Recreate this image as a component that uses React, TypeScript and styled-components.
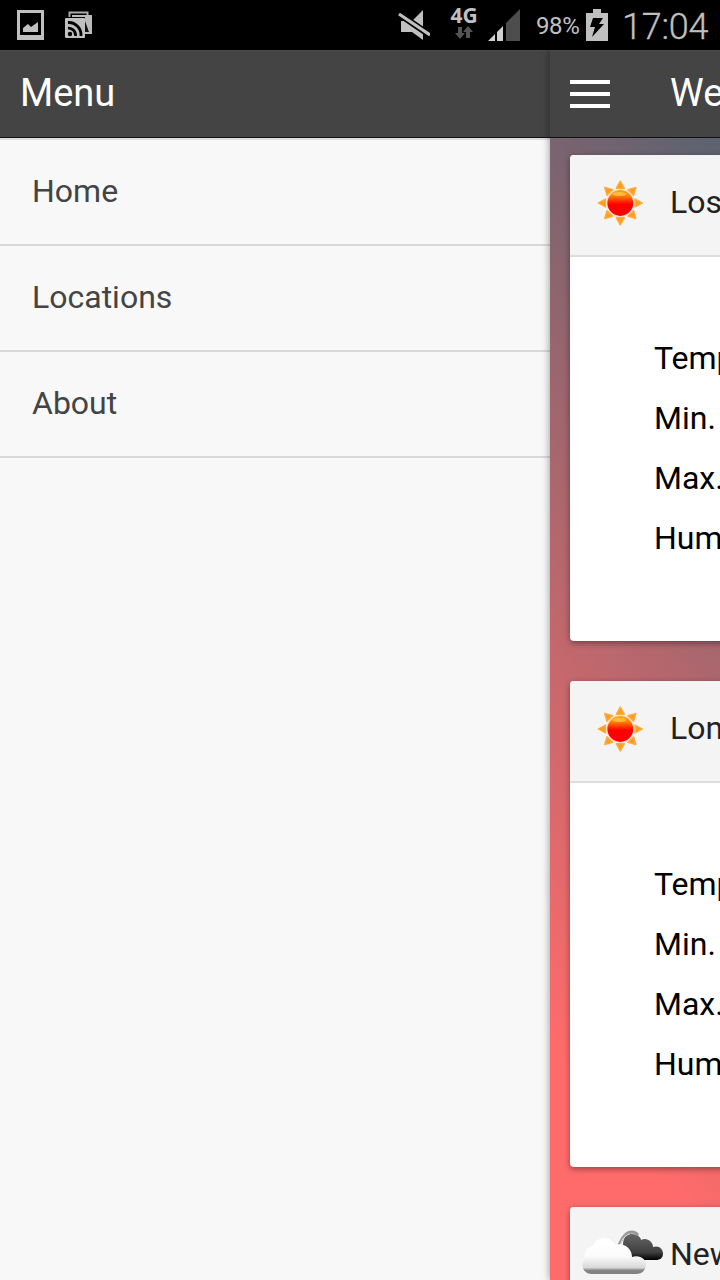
import React from 'react';
import styled, { createGlobalStyle } from 'styled-components';

const GlobalStyle = createGlobalStyle`
  * { box-sizing: border-box; }
  html, body { margin: 0; padding: 0; background: #000; }
  body { width: 720px; height: 1280px; overflow: hidden; font-family: Roboto, sans-serif; }
`;

const Phone = styled.div`
  display: flex;
  flex-direction: column;
  width: 720px;
  height: 1280px;
  overflow: hidden;
`;

const StatusBar = styled.header`
  display: flex;
  align-items: center;
  justify-content: space-between;
  flex: none;
  height: 50px;
  padding: 0 10px 0 16px;
  background: #000;
  color: #c0c0c0;
`;

const StatusGroup = styled.div<{ $gap?: number }>`
  display: flex;
  align-items: center;
  gap: ${({ $gap = 0 }) => $gap}px;
  svg { display: block; flex: none; }
`;

const Network = styled.div`
  display: flex;
  flex-direction: column;
  align-items: center;
  width: 28px;
  height: 50px;
  margin: 0 10px 0 20px;
  padding-top: 5px;
  font: 700 21px/20px 'Noto Sans', sans-serif;
`;

const Percent = styled.span`
  width: 44px;
  margin: 2px 6px 0 16px;
  font-size: 24px;
  line-height: 28px;
  letter-spacing: -0.4px;
  white-space: nowrap;
`;

const Clock = styled.time`
  width: 88px;
  margin: 3px 0 0 14px;
  font-size: 36px;
  font-weight: 300;
  line-height: 44px;
  letter-spacing: -0.25px;
  -webkit-text-stroke: 0.3px currentColor;
  white-space: nowrap;
`;

const Screen = styled.main`
  display: flex;
  flex: 1;
  min-height: 0;
`;

const Drawer = styled.nav`
  width: 550px;
  flex: none;
  background: #f8f8f8;
`;

const Bar = styled.div`
  display: flex;
  align-items: center;
  height: 88px;
  padding: 0 20px;
  background: #444;
  border-bottom: 1px solid #111;
  box-shadow: inset 0 1px 0 #4b4b4b;
  color: #fff;
`;

const BarTitle = styled.h1`
  margin: 0;
  padding-bottom: 1px;
  font-size: 38px;
  line-height: 44px;
  font-weight: 400;
  white-space: nowrap;
`;

const Burger = styled.button`
  display: flex;
  flex: none;
  flex-direction: column;
  gap: 8px;
  width: 40px;
  margin: 1px 60px 0 0;
  padding: 0;
  border: 0;
  background: none;
`;

const BurgerLine = styled.span`
  height: 4px;
  background: #fff;
`;

const MenuList = styled.ul`
  margin: 0;
  padding: 0;
  list-style: none;
  border-top: 2px solid #ddd;
`;

const MenuItem = styled.li`
  display: flex;
  align-items: center;
  height: 106px;
  padding: 0 32px 2px;
  border-bottom: 2px solid #d9d9d9;
  color: #444;
  font-size: 32px;
  line-height: 38px;
`;

const Page = styled.section`
  width: 170px;
  flex: none;
  position: relative;
  box-shadow: 0 0 8px rgba(0, 0, 0, 0.42);
`;

const Feed = styled.div`
  display: flex;
  flex-direction: column;
  gap: 40px;
  height: 1142px;
  padding: 17px 0 0 20px;
  overflow: hidden;
  background: linear-gradient(230deg, #556270 -26px, #ff6b6b 714px);
`;

const Card = styled.article`
  flex: none;
  width: 680px;
  height: 486px;
  border-radius: 4px;
  background: #fff;
  box-shadow: 0 2px 6px rgba(0, 0, 0, 0.4);
  overflow: hidden;
`;

const CardHead = styled.div`
  display: flex;
  align-items: center;
  height: 102px;
  padding: 0 0 6px 10px;
  background: #f4f4f4;
  border-bottom: 2px solid #ddd;
  color: #222;
  font-size: 32px;
  line-height: 38px;
  svg { flex: none; margin-right: 10px; }
`;

const Readings = styled.div`
  display: flex;
  flex-direction: column;
  padding: 71px 0 0 84px;
  color: #000;
  font-size: 32px;
  line-height: 60px;
`;

const Sun = () => (
  <svg width="80" height="80" viewBox="0 0 80 80">
    <defs>
      <linearGradient id="sunFill" x1="0" y1="0" x2="0" y2="1">
        <stop offset="0" stopColor="#ffa526" />
        <stop offset="0.2" stopColor="#ff8a00" />
        <stop offset="0.45" stopColor="#ff2400" />
        <stop offset="0.55" stopColor="#ff0000" />
      </linearGradient>
    </defs>
    <g transform="translate(40.3 41)">
      {[0, 45, 90, 135, 180, 225, 270, 315].map((angle) => (
        <path key={angle} d="M-4 -14.8L0 -22L4 -14.8Z" fill="#ff9c19" stroke="#ffab3d" strokeWidth="1.4" strokeLinejoin="round" transform={`rotate(${angle})`} />
      ))}
      <circle r="14" fill="#ffd9c8" />
      <circle r="12.9" fill="url(#sunFill)" />
      <ellipse cx="-1" cy="-9" rx="7" ry="2" fill="#ffe071" opacity="0.5" />
    </g>
  </svg>
);

const Clouds = () => (
  <svg width="80" height="80" viewBox="0 0 80 80" overflow="visible">
    <defs>
      <linearGradient id="darkCloud" x1="0" y1="0" x2="0" y2="1">
        <stop offset="0" stopColor="#666" />
        <stop offset="0.7" stopColor="#404040" />
        <stop offset="1" stopColor="#000" />
      </linearGradient>
      <linearGradient id="lightCloud" x1="0" y1="0" x2="0" y2="1">
        <stop offset="0" stopColor="#fff" />
        <stop offset="0.5" stopColor="#fcfcfc" />
        <stop offset="0.82" stopColor="#d8d8d8" />
        <stop offset="0.9" stopColor="#868686" />
        <stop offset="1" stopColor="#808080" />
      </linearGradient>
    </defs>
    <path d="M46 40C40 30 44 19 52 20C58 20 61 24 61 26C67 23 73 28 73 33C79 31 83 35 83 39.5C83 44 80 46 76 46H58Z" fill="url(#darkCloud)" />
    <path d="M38 31C40 31 41 24 45 21C49 17 55 17 58 21" fill="none" stroke="#999" strokeWidth="2.8" />
    <path d="M40.5 30C42 25 45 21 50 20" fill="none" stroke="#e4e4e4" strokeWidth="0.8" />
    <path d="M12 60C3 60 0 51 5 45C3 38 8 32 13 32C16 22 31 21 35 31C43 28 52 34 52 43C60 40 67 46 66 51C65 57 62 60 56 60Z" fill="url(#lightCloud)" />
  </svg>
);

const GalleryIcon = () => (
  <svg width="28" height="30" viewBox="0 0 28 30">
    <path fill="#c0c0c0" fillRule="evenodd" d="M1 0H28V30H1ZM4 3V25H25V3Z" />
    <path fill="#c0c0c0" d="M7 22V18L12 14L15 17L22 12V22Z" />
  </svg>
);

const CastIcon = () => (
  <svg width="28" height="28" viewBox="0 0 28 28">
    <path d="M4.5 6V1.5H22.5V4" fill="none" stroke="#aaa" strokeWidth="2" />
    <path d="M7 4H27V23H20V6H7Z" fill="#bbb" />
    <path d="M20 10L24 21H20Z" fill="#111" />
    <rect x="0" y="7" width="20" height="20" rx="1" fill="#c0c0c0" />
    <circle cx="5" cy="23" r="2.2" fill="#000" />
    <path d="M3 17.2A7 7 0 0 1 10.5 25M3 11.5A12.5 12.5 0 0 1 16 25" fill="none" stroke="#000" strokeWidth="2.8" />
  </svg>
);

const MuteIcon = () => (
  <svg width="33" height="32" viewBox="0 0 33 32">
    <path d="M4 12H15L26 1V31L15 23H4Z" fill="#c0c0c0" />
    <path d="M-1 3L35 27.5" stroke="#000" strokeWidth="6.5" />
    <path d="M2 5L33 26" stroke="#c0c0c0" strokeWidth="3.2" />
  </svg>
);

const DataArrows = () => (
  <svg width="18" height="15" viewBox="0 0 18 15">
    <path d="M3 2H7V8H10L5 14L0 8H3ZM11 13V7H8L13 1L18 7H15V13Z" fill="#555" />
  </svg>
);

const SignalIcon = () => (
  <svg width="32" height="32" viewBox="0 0 32 32">
    <path d="M0 32L7 25V32ZM9 23L15 17V32H9Z" fill="#d0d0d0" />
    <path d="M18 14L32 0V32H18Z" fill="#4d4d4d" />
  </svg>
);

const BatteryIcon = () => (
  <svg width="22" height="32" viewBox="0 0 22 32">
    <path d="M7 0H15V4H22V32H0V4H7Z" fill="#c0c0c0" />
    <path d="M7 9H17L13 15H18L6 28L9 18H4Z" fill="#000" />
  </svg>
);

const menu = ['Home', 'Locations', 'About'];
const readings = ['Temperature', 'Min. Temp', 'Max. Temp', 'Humidity'];
const cities = [
  { name: 'Los Angeles', icon: <Sun /> },
  { name: 'London', icon: <Sun /> },
  { name: 'New York', icon: <Clouds /> },
];

export default function App() {
  return (
    <>
      <GlobalStyle />
      <Phone>
        <StatusBar>
          <StatusGroup $gap={21}>
            <GalleryIcon />
            <CastIcon />
          </StatusGroup>
          <StatusGroup>
            <MuteIcon />
            <Network>4G<DataArrows /></Network>
            <SignalIcon />
            <Percent>98%</Percent>
            <BatteryIcon />
            <Clock>17:04</Clock>
          </StatusGroup>
        </StatusBar>
        <Screen>
          <Drawer>
            <Bar><BarTitle>Menu</BarTitle></Bar>
            <MenuList>
              {menu.map((item) => <MenuItem key={item}>{item}</MenuItem>)}
            </MenuList>
          </Drawer>
          <Page>
            <Bar>
              <Burger aria-label="Open menu"><BurgerLine /><BurgerLine /><BurgerLine /></Burger>
              <BarTitle>Weather</BarTitle>
            </Bar>
            <Feed>
              {cities.map(({ name, icon }) => (
                <Card key={name}>
                  <CardHead>{icon}{name}</CardHead>
                  <Readings>
                    {readings.map((label) => <span key={label}>{label}</span>)}
                  </Readings>
                </Card>
              ))}
            </Feed>
          </Page>
        </Screen>
      </Phone>
    </>
  );
}
